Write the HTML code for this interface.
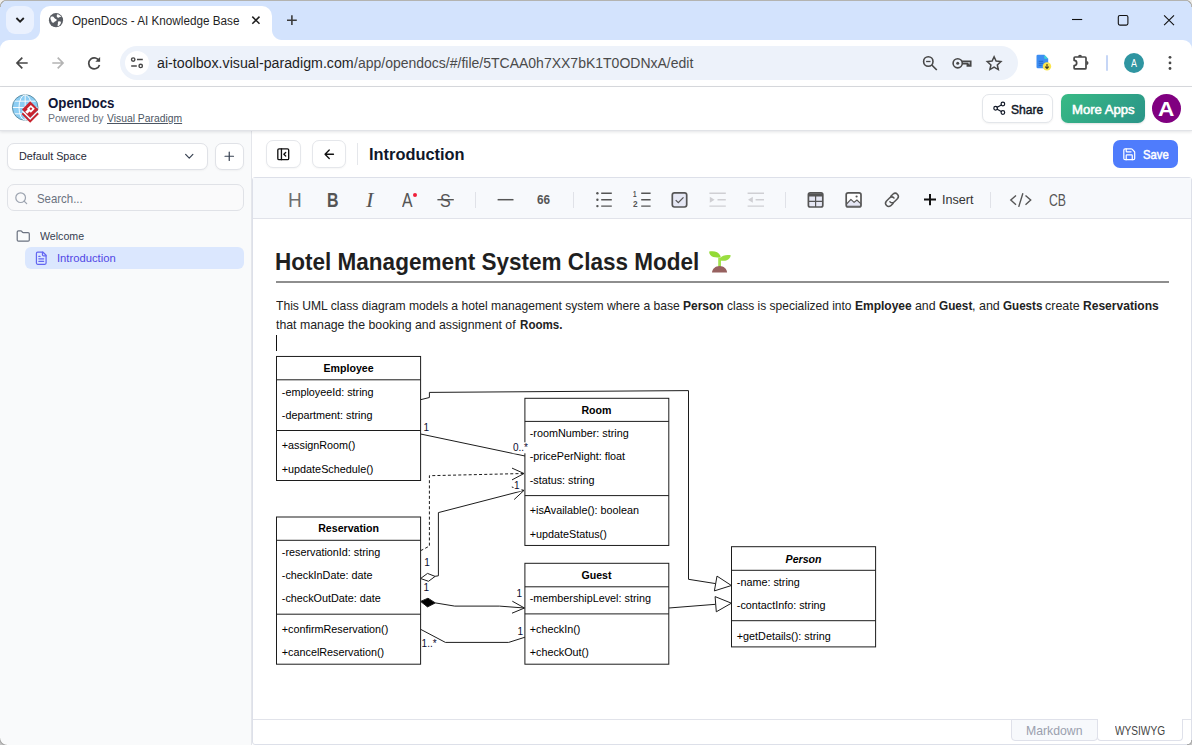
<!DOCTYPE html>
<html lang="en">
<head>
<meta charset="utf-8">
<title>OpenDocs - AI Knowledge Base</title>
<style>
*{box-sizing:border-box;margin:0;padding:0}
html,body{width:1192px;height:745px;overflow:hidden;background:#fff}
body{font-family:"Liberation Sans","DejaVu Sans",sans-serif;color:#1f1f1f;position:relative}
.abs,.t,.ic{position:absolute}
.t{white-space:nowrap;transform-origin:0 0;display:block}
svg{display:block;overflow:visible}
.ic{width:14.5px;height:14.5px;fill:none;stroke-width:2;stroke-linecap:round;stroke-linejoin:round}
/* ---------- browser chrome ---------- */
#tabstrip{left:0;top:0;width:1192px;height:54px;background:#d3e3fd;border-top:1px solid #b3b3b0}
#tabsearch{left:6px;top:6px;width:28px;height:28px;border-radius:9px;background:#eaf1fe}
#tab{left:40px;top:6px;width:232px;height:35px;background:#fff;border-radius:10px 10px 0 0}
#tab:before,#tab:after{content:"";position:absolute;bottom:1px;width:10px;height:10px}
#tab:before{left:-10px;background:radial-gradient(circle at 0 0,rgba(255,255,255,0) 9.5px,#fff 10.5px)}
#tab:after{right:-10px;background:radial-gradient(circle at 100% 0,rgba(255,255,255,0) 9.5px,#fff 10.5px)}
#navbar{left:0;top:40px;width:1192px;height:46px;background:#fff;border-radius:9px 9px 0 0}
#navline{left:0;top:86px;width:1192px;height:1px;background:#dadce0}
#urlpill{left:120px;top:46px;width:898px;height:34px;border-radius:17px;background:#edf2fa}
#sitecirc{left:125px;top:51px;width:24px;height:24px;border-radius:12px;background:#fff}
#chromesep{left:1106px;top:55px;width:2px;height:16px;border-radius:1px;background:#c6d6f6}
#chromeav{left:1124px;top:53px;width:20px;height:20px;border-radius:50%;background:#2f95a1}
/* ---------- app header ---------- */
#apphead{left:0;top:87px;width:1192px;height:44px;background:#fff;border-bottom:1px solid #e1e3e7;box-shadow:0 1px 3px rgba(15,23,42,.12)}
#share{left:982px;top:94px;width:71px;height:29px;border:1px solid #e3e6ea;border-radius:7px;background:#fff;box-shadow:0 1px 2px rgba(0,0,0,.05)}
#more{left:1061px;top:94px;width:84px;height:29px;border-radius:7px;background:linear-gradient(135deg,#38ba85,#2a9488);box-shadow:0 1px 2px rgba(0,0,0,.12)}
#avatar{left:1152px;top:94px;width:29px;height:29px;border-radius:50%;background:#800080}
/* ---------- sidebar ---------- */
#side{left:0;top:131px;width:252px;height:615px;background:#f9fafb;border-right:1px solid #e4e6eb}
#space{left:7px;top:143px;width:201px;height:27px;box-shadow:0 1px 2px rgba(0,0,0,.04);border:1px solid #e0e2e7;border-radius:7px;background:#fff}
#plus{left:215px;top:143px;width:29px;height:27px;box-shadow:0 1px 2px rgba(0,0,0,.04);border:1px solid #e0e2e7;border-radius:7px;background:#fff}
#search{left:7px;top:184px;width:237px;height:27px;border:1px solid #e0e2e7;border-radius:7px;background:#fafafb}
#introrow{left:25px;top:247px;width:219px;height:22px;border-radius:6px;background:#dbe7fe}
/* ---------- main ---------- */
#main{left:252px;top:130px;width:940px;height:615px;background:#fff}
#btnA,#btnB{top:140px;width:34px;height:28px;border:1px solid #e5e7eb;border-radius:7px;background:#fff;box-shadow:0 1px 2px rgba(0,0,0,.04)}
#btnA{left:266px;width:35px}#btnB{left:312px}
#hsep{left:357px;top:143px;width:1px;height:22px;background:#e5e7eb}
#save{left:1113px;top:140px;width:65px;height:28px;border-radius:7px;background:#4f7cfc}
#editor{left:252px;top:177px;width:940px;height:568px;background:#fff;border:1px solid #dde0e9;border-radius:3px}
#etool{left:253px;top:178px;width:938px;height:41px;background:#f7f9fc;border-bottom:1px solid #e1e3ea}
.tsep{top:192px;width:1px;height:16px;background:#e0e2e8}
#h1line{left:276px;top:281px;width:893px;height:2px;background:#8e8e8e}
#caret{left:276px;top:335.3px;width:1px;height:15.5px;background:#111}
#botline{left:253px;top:719px;width:938px;height:1px;background:#e1e3ea}
#md{left:1011px;top:719px;width:87px;height:22px;border:1px solid #dfe1ea;border-radius:0 0 4px 4px;background:#f7f9fc}
#wys{left:1097px;top:719px;width:86px;height:22px;border:1px solid #dfe1ea;border-top:0;border-radius:0 0 4px 4px;background:#fff}
#wystop{left:1098px;top:719px;width:84px;height:1px;background:#fff}
.corner{width:7px;height:7px}
#cTL{left:0;top:0;background:radial-gradient(circle at 100% 100%,rgba(0,0,0,0) 6px,#b3b3b0 6.4px,#b3b3b0 7.1px,#eeedeb 7.6px)}
#cTR{right:0;top:0;background:radial-gradient(circle at 0 100%,rgba(0,0,0,0) 6px,#b3b3b0 6.4px,#b3b3b0 7.1px,#eeedeb 7.6px)}
#cBL{left:0;bottom:0;width:7px;height:7px;background:radial-gradient(circle at 100% 0,rgba(0,0,0,0) 5.800px,rgba(255,255,255,.8) 6.300px,#a3a3a3 7.200px,#c4c4c4 8.500px)}
#cBR{right:0;bottom:0;width:5px;height:5px;background:radial-gradient(circle at 0 0,rgba(0,0,0,0) 4px,#a4a4a4 4.6px,#c9c9c9 6px)}
#reddot{left:412.7px;top:193.2px;width:4.2px;height:4.2px;border-radius:50%;background:#f01f3a}
</style>
</head>
<body>
<!-- ================= browser chrome ================= -->
<div class="abs" id="tabstrip"></div>
<div class="abs" id="tabsearch"></div>
<div class="abs" id="navbar"></div>
<div class="abs" id="tab"></div>
<div class="abs" id="navline"></div>
<div class="abs" id="urlpill"></div>
<div class="abs" id="sitecirc"></div>
<div class="abs" id="chromesep"></div>
<div class="abs" id="chromeav"></div>
<svg class="abs" id="chromeicons" style="left:0;top:0" width="1192" height="87" viewBox="0 0 1192 87" fill="none" stroke-linecap="round" stroke-linejoin="round">
  <!-- tab search chevron -->
  <path d="M16.4 18l3.7 3.7 3.7-3.7" stroke="#1f1f1f" stroke-width="1.8" stroke-linecap="butt" stroke-linejoin="miter"/>
  <!-- favicon globe -->
  <circle cx="56" cy="20.2" r="7.1" fill="#5a5e64"/>
  <path d="M51.6 16.6c1.2-.3 2.2.2 2.6 1.1.4 1 1.6.9 2.2 1.6.7.8 0 1.800-.9 2-1 .2-1.200 1.300-2.200 1.500-1 .2-1.700-.7-1.900-1.700-.2-1-1-1.600-1-2.600 0-.8.500-1.700 1.200-1.900zM57.400 14.300c1.500.3 2.900 1.200 3.700 2.500-.7.400-1.600.2-2.200.7-.6.500-1.500.2-1.900-.4-.5-.8-.3-2.100.4-2.800zM58.300 21.400c.8-.4 1.900-.2 2.600.3.200.700-.100 1.600-.500 2.300-.6 1-1.600 1.900-2.600 2.300-.4-.8-.1-1.700.1-2.500.2-.9-.300-2 .400-2.400z" fill="#fff"/>
  <!-- tab close -->
  <path d="M252.300 16.600l7.200 7.200M259.500 16.600l-7.200 7.200" stroke="#1f1f1f" stroke-width="1.5" stroke-linecap="butt"/>
  <!-- new tab -->
  <path d="M287 20.200h9.800M291.900 15.300v9.800" stroke="#3c3c3c" stroke-width="1.6" stroke-linecap="butt"/>
  <!-- window controls -->
  <path d="M1072 19.500h10.200" stroke="#111" stroke-width="1.1" stroke-linecap="butt"/>
  <rect x="1118.300" y="15.500" width="9.600" height="9.600" rx="1.600" stroke="#111" stroke-width="1.1"/>
  <path d="M1164.100 15.300l9.900 9.900M1174 15.300l-9.900 9.900" stroke="#111" stroke-width="1.1" stroke-linecap="butt"/>
  <!-- back / forward / reload -->
  <path d="M27.700 63H17.200M22.300 57.700L17 63l5.300 5.300" stroke="#474747" stroke-width="1.7" stroke-linecap="butt" stroke-linejoin="miter"/>
  <path d="M52.300 63h10.500M57.700 57.700L63 63l-5.300 5.300" stroke="#b4b4b4" stroke-width="1.7" stroke-linecap="butt" stroke-linejoin="miter"/>
  <path d="M99.300 61.200A5.500 5.500 0 1 0 99.500 64.900" stroke="#474747" stroke-width="1.7" stroke-linecap="butt"/>
  <path d="M100.100 57v4.800h-4.800z" fill="#474747"/>
  <!-- site info (tune) -->
  <circle cx="133.200" cy="59.600" r="1.700" stroke="#474747" stroke-width="1.400"/>
  <path d="M137 59.600h5.800M131.200 65.900h5.600" stroke="#474747" stroke-width="1.500" stroke-linecap="butt"/>
  <circle cx="140.700" cy="65.900" r="1.700" stroke="#474747" stroke-width="1.400"/>
  <!-- zoom -->
  <circle cx="928.300" cy="61.500" r="4.700" stroke="#474747" stroke-width="1.600"/>
  <path d="M931.800 65l5 5" stroke="#474747" stroke-width="1.700" stroke-linecap="butt"/>
  <path d="M926.100 61.500h4.400" stroke="#474747" stroke-width="1.300" stroke-linecap="butt"/>
  <!-- key -->
  <circle cx="957.700" cy="63.300" r="4.600" stroke="#474747" stroke-width="1.600"/>
  <circle cx="957.700" cy="63.300" r="1.500" fill="#474747"/>
  <path d="M962 61.400h8.700v4.500h-3.300v-2.200h-5.200" stroke="#474747" stroke-width="1.700" stroke-linejoin="miter" stroke-linecap="butt"/><path d="M968.500 63.500v2.200" stroke="#474747" stroke-width="2.400" stroke-linecap="butt"/>
  <!-- star -->
  <path d="M994.100 56.700l2 4.400 4.800.5-3.600 3.300 1 4.700-4.200-2.400-4.200 2.400 1-4.700-3.600-3.300 4.800-.5z" stroke="#474747" stroke-width="1.500" stroke-linejoin="miter"/>
  <!-- extension: blue doc with yellow badge -->
  <path d="M1037.800 54.800h6.500l3.900 3.900v8.300a1.300 1.300 0 0 1-1.300 1.300h-9.100a1.300 1.300 0 0 1-1.300-1.300v-10.900a1.300 1.300 0 0 1 1.300-1.300z" fill="#3d8df2"/>
  <path d="M1044.300 54.800l3.900 3.900h-3.900z" fill="#3fd3d0"/>
  <path d="M1038.700 61.300h4.500M1038.700 63.300h4.500M1038.700 65.300h3" stroke="#1e5fc4" stroke-width=".8" stroke-linecap="butt"/>
  <circle cx="1047" cy="66.400" r="4.200" fill="#fbe54d"/>
  <path d="M1047 64v4.200M1045.200 66.600l1.800 1.800 1.800-1.800" stroke="#3a3a2a" stroke-width="1.100" stroke-linecap="butt" stroke-linejoin="miter"/>
  <!-- puzzle -->
  <path d="M1074.100 60.300v-2.300a1 1 0 0 1 1-1h9.900a1 1 0 0 1 1 1v9.900a1 1 0 0 1-1 1h-9.900a1 1 0 0 1-1-1v-2.400a2.600 2.600 0 0 0 0-5.200z" stroke="#474747" stroke-width="1.700" stroke-linejoin="round"/>
  <path d="M1078 56.700a2 2 0 0 1 4 0zM1086.500 60.900a2 2 0 0 1 0 4z" fill="#474747"/>
  <!-- menu dots -->
  <circle cx="1170" cy="57.300" r="1.400" fill="#474747"/><circle cx="1170" cy="62.900" r="1.400" fill="#474747"/><circle cx="1170" cy="68.500" r="1.400" fill="#474747"/>
</svg>

<!-- ================= app ================= -->
<div class="abs" id="side"></div>
<div class="abs" id="main"></div>
<div class="abs" id="apphead"></div>
<!-- logo -->
<svg class="abs" id="logo" style="left:11px;top:93px" width="30" height="30" viewBox="11 93 30 30">
  <circle cx="25.200" cy="107.500" r="12.800" fill="#8ccdf3" stroke="#55879c" stroke-width=".9"/>
  <g stroke="#fff" stroke-width=".9" fill="none">
    <path d="M25.200 94.800v25.400M13 107.500h24.400M14.600 101.200h21.200M14.600 113.800h21.200"/>
    <ellipse cx="25.200" cy="107.500" rx="6.200" ry="12.700"/>
  </g>
  <path d="M22.300 113.300l7.900 7.900 7.900-7.900" stroke="#c8242f" stroke-width="2.200" fill="none"/>
  <path d="M22.400 111.200l7.800 7.800 7.800-7.800" stroke="#fff" stroke-width="1.200" fill="none"/>
  <path d="M30.200 101.300l8.200 8.200-8.200 8.200-8.200-8.200z" fill="#c8242f"/>
  <path d="M30.900 104.900l3.900 3.900-3.900 3.900-1.300-1.300-2.400 2.400-2-2 2.400-2.400-.6-.6z" fill="#fff"/>
  <path d="M30.900 107.300l1.500 1.500-1.500 1.500-1.500-1.500z" fill="#c8242f"/>
</svg>
<div class="abs" id="share"></div>
<div class="abs" id="more"></div>
<div class="abs" id="avatar"></div>
<svg class="ic" style="left:992.1px;top:100.95px" viewBox="0 0 24 24" stroke="#111827"><circle cx="18" cy="5" r="3"/><circle cx="6" cy="12" r="3"/><circle cx="18" cy="19" r="3"/><path d="m8.590 13.510 6.830 3.980M15.410 6.510l-6.820 3.980"/></svg>

<!-- sidebar -->
<div class="abs" id="space"></div>
<div class="abs" id="plus"></div>
<div class="abs" id="search"></div>
<div class="abs" id="introrow"></div>
<svg class="ic" style="left:181.75px;top:149.15px" viewBox="0 0 24 24" stroke="#374151"><path d="m6 9 6 6 6-6"/></svg>
<svg class="ic" style="left:221.85px;top:148.75px" viewBox="0 0 24 24" stroke="#374151"><path d="M5 12h14M12 5v14"/></svg>
<svg class="ic" style="left:13.8px;top:190.85px" viewBox="0 0 24 24" stroke="#9ca3af"><circle cx="11" cy="11" r="8"/><path d="m21 21-4.300-4.300"/></svg>
<svg class="ic" style="left:16.1px;top:229px" viewBox="0 0 24 24" stroke="#6b7280"><path d="M20 20a2 2 0 0 0 2-2V8a2 2 0 0 0-2-2h-7.900a2 2 0 0 1-1.690-.9L9.600 3.900A2 2 0 0 0 7.930 3H4a2 2 0 0 0-2 2v13a2 2 0 0 0 2 2Z"/></svg>
<svg class="ic" style="left:33.95px;top:250.85px" viewBox="0 0 24 24" stroke="#6366f1"><path d="M15 2H6a2 2 0 0 0-2 2v16a2 2 0 0 0 2 2h12a2 2 0 0 0 2-2V7Z"/><path d="M14 2v4a2 2 0 0 0 2 2h4"/><path d="M10 9H8M16 13H8M16 17H8"/></svg>

<!-- main header -->
<div class="abs" id="btnA"></div>
<div class="abs" id="btnB"></div>
<div class="abs" id="hsep"></div>
<div class="abs" id="save"></div>
<svg class="ic" style="left:275.85px;top:146.8px;stroke-width:2.2" viewBox="0 0 24 24" stroke="#111"><rect x="3" y="3" width="18" height="18" rx="2"/><path d="M9 3v18M16 15l-3-3 3-3"/></svg>
<svg class="ic" style="left:321.85px;top:146.75px;stroke-width:2.2" viewBox="0 0 24 24" stroke="#111"><path d="m12 19-7-7 7-7M19 12H5"/></svg>
<svg class="ic" style="left:1121.75px;top:146.75px" viewBox="0 0 24 24" stroke="#fff"><path d="M15.200 3a2 2 0 0 1 1.400.6l3.800 3.800a2 2 0 0 1 .6 1.400V19a2 2 0 0 1-2 2H5a2 2 0 0 1-2-2V5a2 2 0 0 1 2-2z"/><path d="M17 21v-7a1 1 0 0 0-1-1H8a1 1 0 0 0-1 1v7M7 3v4a1 1 0 0 0 1 1h7"/></svg>

<!-- editor toolbar -->
<div class="abs" id="editor"></div>
<div class="abs" id="etool"></div>
<div class="abs tsep" style="left:475px"></div>
<div class="abs tsep" style="left:573px"></div>
<div class="abs tsep" style="left:785px"></div>
<div class="abs tsep" style="left:990px"></div>
<div class="abs" id="reddot"></div>
<svg class="abs" id="tbicons" style="left:253px;top:179px" width="939" height="40" viewBox="253 179 939 40" fill="none">
  <!-- bullet list -->
  <g fill="#555"><circle cx="597.400" cy="193.300" r="1.200"/><circle cx="597.400" cy="199.700" r="1.200"/><circle cx="597.400" cy="206.100" r="1.200"/></g>
  <path d="M601.200 193.300h10.600M601.200 199.700h10.600M601.200 206.100h10.600" stroke="#555" stroke-width="1.400"/>
  <!-- ordered list lines -->
  <path d="M641.200 193.300h9.400M641.200 199.700h9.400M641.200 206.100h9.400" stroke="#555" stroke-width="1.400"/>
  <!-- task checkbox -->
  <rect x="672.300" y="192.800" width="14.400" height="14.200" rx="2.200" fill="#e6e8f5" stroke="#555" stroke-width="1.700"/>
  <path d="M675.700 200.100l2.600 2.500 5.200-5.200" stroke="#555" stroke-width="1.300"/>
  <!-- indent / outdent (disabled) -->
  <path d="M709.400 193.300h16.400M717.500 199.700h8.300M709.400 206.100h16.400" stroke="#cfcfd3" stroke-width="1.400"/>
  <path d="M709.800 196.700l4.800 3-4.800 3z" fill="#cfcfd3"/>
  <path d="M747.600 193.300h16.400M755.600 199.700h8.400M747.600 206.100h16.400" stroke="#cfcfd3" stroke-width="1.400"/>
  <path d="M752.800 196.700l-4.800 3 4.800 3z" fill="#cfcfd3"/>
  <!-- table -->
  <rect x="808.400" y="192.800" width="14.400" height="14.200" rx="1.800" fill="#e6e8f5" stroke="#555" stroke-width="1.700"/>
  <path d="M808.300 195h14.600" stroke="#555" stroke-width="3"/>
  <path d="M808.300 201.400h14.600M815.600 195v12" stroke="#555" stroke-width="1.200"/>
  <!-- image -->
  <rect x="846.200" y="192.800" width="14.800" height="14.200" rx="2" fill="#fff" stroke="#555" stroke-width="1.700"/>
  <path d="M846.600 204l4.300-4.600 3.200 3 2.800-2.400 3.800 3.600v2.700h-14.100z" fill="#e4e6f4" stroke="#555" stroke-width="1.100" stroke-linejoin="round"/>
  <circle cx="856.600" cy="196.500" r="1.100" fill="#555"/>
  <!-- link -->
  <g stroke="#555" stroke-width="1.500" stroke-linecap="round">
    <path d="M890.800 196.300l2.300-2.300a3.200 3.200 0 0 1 4.500 4.500l-3.200 3.200a3.200 3.200 0 0 1-4.500 0"/>
    <path d="M893.100 203.400l-2.300 2.300a3.200 3.200 0 0 1-4.500-4.500l3.200-3.200a3.200 3.200 0 0 1 4.500 0"/>
  </g>
  <path d="M497.600 199.700h15.900" stroke="#555" stroke-width="1.500"/>
  <path d="M437.400 199.700h16.400" stroke="#555" stroke-width="1.400"/>
  <!-- insert plus -->
  <path d="M924 199.600h12M930 193.900v11.400" stroke="#111" stroke-width="2"/>
  <!-- code -->
  <path d="M1016 195.500l-5.200 4.600 5.200 4.600M1025.500 195.500l5.200 4.600-5.200 4.600M1022.900 193.300l-4.200 13.600" stroke="#555" stroke-width="1.400" stroke-linejoin="miter"/>
</svg>

<!-- content -->
<div class="abs" id="h1line"></div>
<div class="abs" id="caret"></div>
<svg class="abs" id="seedling" style="left:707px;top:249px" width="26" height="25" viewBox="707 249 26 25" role="img" aria-label="seedling">
  <title>🌱</title>
  <path d="M718.200 257.500h2.800v9.500h-2.800z" fill="#a4e350"/>
  <path d="M709.200 251.600c4.500-1 9.200-.1 11.300 4.300l.1 1.300c-4.200.5-8.200.3-10.300-2.200-.8-1-1.200-2.200-1.100-3.400z" fill="#93da35"/>
  <path d="M720.200 258.300c1.800-3 6.300-3.700 10.500-3-.2 2.600-2.500 5-5.600 5.400-1.700.2-3.400.1-4.900-.3z" fill="#9ade40"/>
  <path d="M712 272.600c.2-3.600 3.500-6.500 7.600-6.500s7.300 2.900 7.500 6.500z" fill="#97615f"/>
</svg>

<svg class="abs" id="diagram" style="left:0;top:0" width="1192" height="745" viewBox="0 0 1192 745" font-family="'Liberation Sans',Arial,sans-serif" font-size="10.8">
<g fill="none" stroke="#1c1c1c" stroke-width="1" stroke-linejoin="miter">
<polyline points="420.6,399.7 429.4,397.5 429.4,392.4 688.5,390.6 688.5,579.3 715.6,583.6"/>
<polygon points="731.4,585.5 717,576.1 714.4,590.9" fill="#fff"/>
<polyline points="668.8,608 715.6,604.3"/>
<polygon points="731.4,603.2 715.1,596.6 716.3,611.8" fill="#fff"/>
<line x1="420.6" y1="434" x2="525" y2="456"/>
<polyline points="420.6,550.7 429.4,546.1 429.4,475.7 524,473.5" stroke-dasharray="3 2.2"/>
<polyline points="512,468.1 524,473.5 512,479.9"/>
<polyline points="435.1,576.3 438.4,575.8 438.4,512.6 524,490.4"/>
<polyline points="511.8,487 524,490.4 514.2,499.5"/>
<polygon points="420.6,578.5 427.5,573.4 435.1,576.4 428.5,581.3" fill="#fff"/>
<polygon points="420.6,601.4 428,598.2 435.3,602.9 427.5,606.9" fill="#000"/>
<polyline points="435.3,602.9 454.7,606.1 499.4,606.1 524.5,608"/>
<polyline points="512.3,601.2 524.5,608 512,613.2"/>
<polyline points="420.6,629.3 445.4,642.4 508.7,642.4 525,637.2"/>
</g>
<g>
<rect x="276.5" y="356.45" width="144.1" height="124.05" fill="#fff" stroke="#1c1c1c" stroke-width="1"/>
<path d="M276.5 379.8H420.6M276.5 430.5H420.6" stroke="#1c1c1c" stroke-width="1" fill="none"/>
<text x="348.55" y="372" text-anchor="middle" font-weight="bold" font-size="10.6" fill="#000">Employee</text>
<text x="281.8" y="396" fill="#000">-employeeId: string</text>
<text x="281.8" y="419" fill="#000">-department: string</text>
<text x="281.8" y="449" fill="#000">+assignRoom()</text>
<text x="281.8" y="473" fill="#000">+updateSchedule()</text>
</g>
<g>
<rect x="276.5" y="517.0" width="144.1" height="147.2" fill="#fff" stroke="#1c1c1c" stroke-width="1"/>
<path d="M276.5 540.3H420.6M276.5 614.2H420.6" stroke="#1c1c1c" stroke-width="1" fill="none"/>
<text x="348.55" y="532" text-anchor="middle" font-weight="bold" font-size="10.6" fill="#000">Reservation</text>
<text x="281.8" y="556" fill="#000">-reservationId: string</text>
<text x="281.8" y="579" fill="#000">-checkInDate: date</text>
<text x="281.8" y="602" fill="#000">-checkOutDate: date</text>
<text x="281.8" y="633" fill="#000">+confirmReservation()</text>
<text x="281.8" y="656" fill="#000">+cancelReservation()</text>
</g>
<g>
<rect x="524.9" y="398.3" width="143.9" height="147.15" fill="#fff" stroke="#1c1c1c" stroke-width="1"/>
<path d="M524.9 421.4H668.8M524.9 495.6H668.8" stroke="#1c1c1c" stroke-width="1" fill="none"/>
<text x="596.45" y="414" text-anchor="middle" font-weight="bold" font-size="10.6" fill="#000">Room</text>
<text x="529.7" y="437" fill="#000">-roomNumber: string</text>
<text x="529.7" y="460" fill="#000">-pricePerNight: float</text>
<text x="529.7" y="484" fill="#000">-status: string</text>
<text x="529.7" y="514" fill="#000">+isAvailable(): boolean</text>
<text x="529.7" y="538" fill="#000">+updateStatus()</text>
</g>
<g>
<rect x="524.9" y="563.3" width="143.9" height="100.9" fill="#fff" stroke="#1c1c1c" stroke-width="1"/>
<path d="M524.9 586.8H668.8M524.9 613.9H668.8" stroke="#1c1c1c" stroke-width="1" fill="none"/>
<text x="596.45" y="579" text-anchor="middle" font-weight="bold" font-size="10.6" fill="#000">Guest</text>
<text x="529.7" y="602" fill="#000">-membershipLevel: string</text>
<text x="529.7" y="633" fill="#000">+checkIn()</text>
<text x="529.7" y="656" fill="#000">+checkOut()</text>
</g>
<g>
<rect x="731.5" y="546.7" width="144.1" height="100.2" fill="#fff" stroke="#1c1c1c" stroke-width="1"/>
<path d="M731.5 570.3H875.6M731.5 620.7H875.6" stroke="#1c1c1c" stroke-width="1" fill="none"/>
<text x="803.55" y="563" text-anchor="middle" font-weight="bold" font-size="10.6" font-style="italic" fill="#000">Person</text>
<text x="736.8" y="586" fill="#000">-name: string</text>
<text x="736.8" y="609" fill="#000">-contactInfo: string</text>
<text x="736.8" y="640" fill="#000">+getDetails(): string</text>
</g>
<g font-size="10" fill="#0b0b30">
<text x="423.6" y="431">1</text>
<rect x="512.5" y="442.3" width="15" height="11" fill="#fff"/>
<text x="513.0" y="451">0..*</text>
<rect x="513.5" y="480.3" width="8" height="11" fill="#fff"/>
<text x="514.0" y="489">1</text>
<text x="424.3" y="566">1</text>
<text x="423.6" y="591">1</text>
<text x="516.5" y="597">1</text>
<text x="517.6" y="635">1</text>
<text x="421.6" y="647">1..*</text>
</g>
</svg>

<!-- bottom mode switch -->
<div class="abs" id="botline"></div>
<div class="abs" id="md"></div>
<div class="abs" id="wys"></div>
<div class="abs" id="wystop"></div>

<div class="abs corner" id="cTL"></div><div class="abs corner" id="cTR"></div><div class="abs corner" id="cBL"></div><div class="abs corner" id="cBR"></div>
<!-- ================= text ================= -->
<span class="t" id="tabtitle" style="left:71.90px;top:12.60px;font-size:12px;line-height:16px;color:#1f1f1f;transform:scaleX(0.9767)">OpenDocs - AI Knowledge Base</span>
<span class="t" id="url" style="left:157.30px;top:54.00px;font-size:14px;line-height:18px;color:#1f1f1f;transform:scaleX(1.0151)">ai-toolbox.visual-paradigm.com</span>
<span class="t" id="urlpath" style="left:354.00px;top:54.00px;font-size:14px;line-height:18px;color:#4a4a4a">/app/opendocs/#/file/5TCAA0h7XX7bK1T0ODNxA/edit</span>
<span class="t" id="chromeA" style="left:1130.70px;top:55.90px;font-size:10.6px;line-height:14px;color:#fff;transform:scaleX(0.8375)">A</span>
<span class="t" id="brand" style="left:47.80px;top:94.70px;font-size:13.8px;line-height:18px;color:#111636;font-weight:700;transform:scaleX(0.9636)">OpenDocs</span>
<span class="t" id="powered1" style="left:47.90px;top:110.80px;font-size:10.6px;line-height:14px;color:#6b7280;transform:scaleX(0.9921)">Powered by</span>
<span class="t" id="powered2" style="left:106.70px;top:110.80px;font-size:10.6px;line-height:14px;color:#4b5563;text-decoration:underline;text-underline-offset:1px;transform:scaleX(0.9764)">Visual Paradigm</span>
<span class="t" id="sharetxt" style="left:1011.20px;top:100.80px;font-size:13.2px;line-height:17px;color:#111827;transform:scaleX(0.9181);-webkit-text-stroke:.45px #111827">Share</span>
<span class="t" id="moretxt" style="left:1071.81px;top:100.80px;font-size:13.2px;line-height:17px;color:#fff;transform:scaleX(0.9925);-webkit-text-stroke:.55px #fff">More Apps</span>
<span class="t" id="avatarA" style="left:1158.10px;top:94.70px;font-size:21px;line-height:27px;color:#fff;font-weight:700;transform:scaleX(1.0800)">A</span>
<span class="t" id="spacetxt" style="left:19.20px;top:148.80px;font-size:11.4px;line-height:15px;color:#1f2937;transform:scaleX(0.9464)">Default Space</span>
<span class="t" id="searchtxt" style="left:37.00px;top:190.80px;font-size:12.6px;line-height:16px;color:#6b7280;transform:scaleX(0.9058)">Search...</span>
<span class="t" id="welcome" style="left:39.70px;top:229.00px;font-size:11.4px;line-height:15px;color:#374151;transform:scaleX(0.9333)">Welcome</span>
<span class="t" id="introside" style="left:57.31px;top:250.80px;font-size:11.4px;line-height:15px;color:#5046e5;transform:scaleX(0.9865)">Introduction</span>
<span class="t" id="doctitle" style="left:368.99px;top:143.70px;font-size:16.2px;line-height:21px;color:#0f172a;font-weight:700;transform:scaleX(1.0117)">Introduction</span>
<span class="t" id="savetxt" style="left:1143.00px;top:146.90px;font-size:12.6px;line-height:16px;color:#fff;transform:scaleX(0.8954);-webkit-text-stroke:.5px #fff">Save</span>
<span class="t" id="tbH" style="left:287.93px;top:186.80px;font-size:19.7px;line-height:26px;color:#6e6e6e;transform:scaleX(0.9667)">H</span>
<span class="t" id="tbB" style="left:327.29px;top:186.80px;font-size:19.7px;line-height:26px;color:#555;font-weight:700;transform:scaleX(0.8077)">B</span>
<span class="t" id="tbI" style="left:366.09px;top:187.20px;font-size:20.5px;line-height:27px;color:#555;font-style:italic;font-family:'Liberation Serif','DejaVu Serif',serif;transform:scaleX(1.0889)">I</span>
<span class="t" id="tbA" style="left:401.80px;top:186.80px;font-size:19.7px;line-height:26px;color:#555;transform:scaleX(0.8000)">A</span>
<span class="t" id="tbS" style="left:439.60px;top:187.80px;font-size:19.0px;line-height:25px;color:#555;transform:scaleX(0.8500)">S</span>
<span class="t" id="tb66" style="left:536.70px;top:191.90px;font-size:12.0px;line-height:16px;color:#555;font-weight:700;transform:scaleX(0.9800)">66</span>
<span class="t" id="tb1" style="left:633.20px;top:188.20px;font-size:9.2px;line-height:12px;color:#555;font-weight:700;transform:scaleX(0.6800)">1</span>
<span class="t" id="tb2" style="left:632.90px;top:198.30px;font-size:9.2px;line-height:12px;color:#555;font-weight:700;transform:scaleX(0.9000)">2</span>
<span class="t" id="tbInsert" style="left:941.90px;top:191.80px;font-size:12.6px;line-height:16px;color:#333">Insert</span>
<span class="t" id="tbCB" style="left:1049.00px;top:190.30px;font-size:16.8px;line-height:22px;color:#555;transform:scaleX(0.7310)">CB</span>
<h1 class="t" id="h1" style="left:274.53px;top:247.00px;font-size:23.2px;line-height:30px;color:#1f1f1f;font-weight:700;transform:scaleX(0.9713)">Hotel Management System Class Model</h1>
<span class="t" id="p1a" style="left:275.60px;top:296.80px;font-size:13px;line-height:17px;color:#222;transform:scaleX(0.9324)">This UML class diagram models a hotel management system where a base</span>
<span class="t" id="p1b" style="left:683.30px;top:296.80px;font-size:13px;line-height:17px;color:#222;font-weight:700;transform:scaleX(0.9223)">Person</span>
<span class="t" id="p1c" style="left:727.20px;top:296.80px;font-size:13px;line-height:17px;color:#222;transform:scaleX(0.9215)">class is specialized into</span>
<span class="t" id="p1d" style="left:854.80px;top:296.80px;font-size:13px;line-height:17px;color:#222;font-weight:700;transform:scaleX(0.9235)">Employee</span>
<span class="t" id="p1e" style="left:914.80px;top:296.80px;font-size:13px;line-height:17px;color:#222;transform:scaleX(0.9506)">and</span>
<span class="t" id="p1f" style="left:938.50px;top:296.80px;font-size:13px;line-height:17px;color:#222;font-weight:700;transform:scaleX(0.9037)">Guest</span>
<span class="t" id="p1g" style="left:971.64px;top:296.80px;font-size:13px;line-height:17px;color:#222;transform:scaleX(0.9609)">, and</span>
<span class="t" id="p1h" style="left:1002.50px;top:296.80px;font-size:13px;line-height:17px;color:#222;font-weight:700;transform:scaleX(0.8941)">Guests</span>
<span class="t" id="p1i" style="left:1045.00px;top:296.80px;font-size:13px;line-height:17px;color:#222;transform:scaleX(0.9582)">create</span>
<span class="t" id="p1j" style="left:1082.60px;top:296.80px;font-size:13px;line-height:17px;color:#222;font-weight:700;transform:scaleX(0.9273)">Reservations</span>
<span class="t" id="p2a" style="left:275.60px;top:315.70px;font-size:13px;line-height:17px;color:#222;transform:scaleX(0.9473)">that manage the booking and assignment of</span>
<span class="t" id="p2b" style="left:519.70px;top:315.70px;font-size:13px;line-height:17px;color:#222;font-weight:700;transform:scaleX(0.8925)">Rooms.</span>
<span class="t" id="mdtxt" style="left:1025.74px;top:721.70px;font-size:12.8px;line-height:17px;color:#9aa0ae;transform:scaleX(0.9566)">Markdown</span>
<span class="t" id="wystxt" style="left:1115.00px;top:721.70px;font-size:12.8px;line-height:17px;color:#444;transform:scaleX(0.7911)">WYSIWYG</span>
</body>
</html>
